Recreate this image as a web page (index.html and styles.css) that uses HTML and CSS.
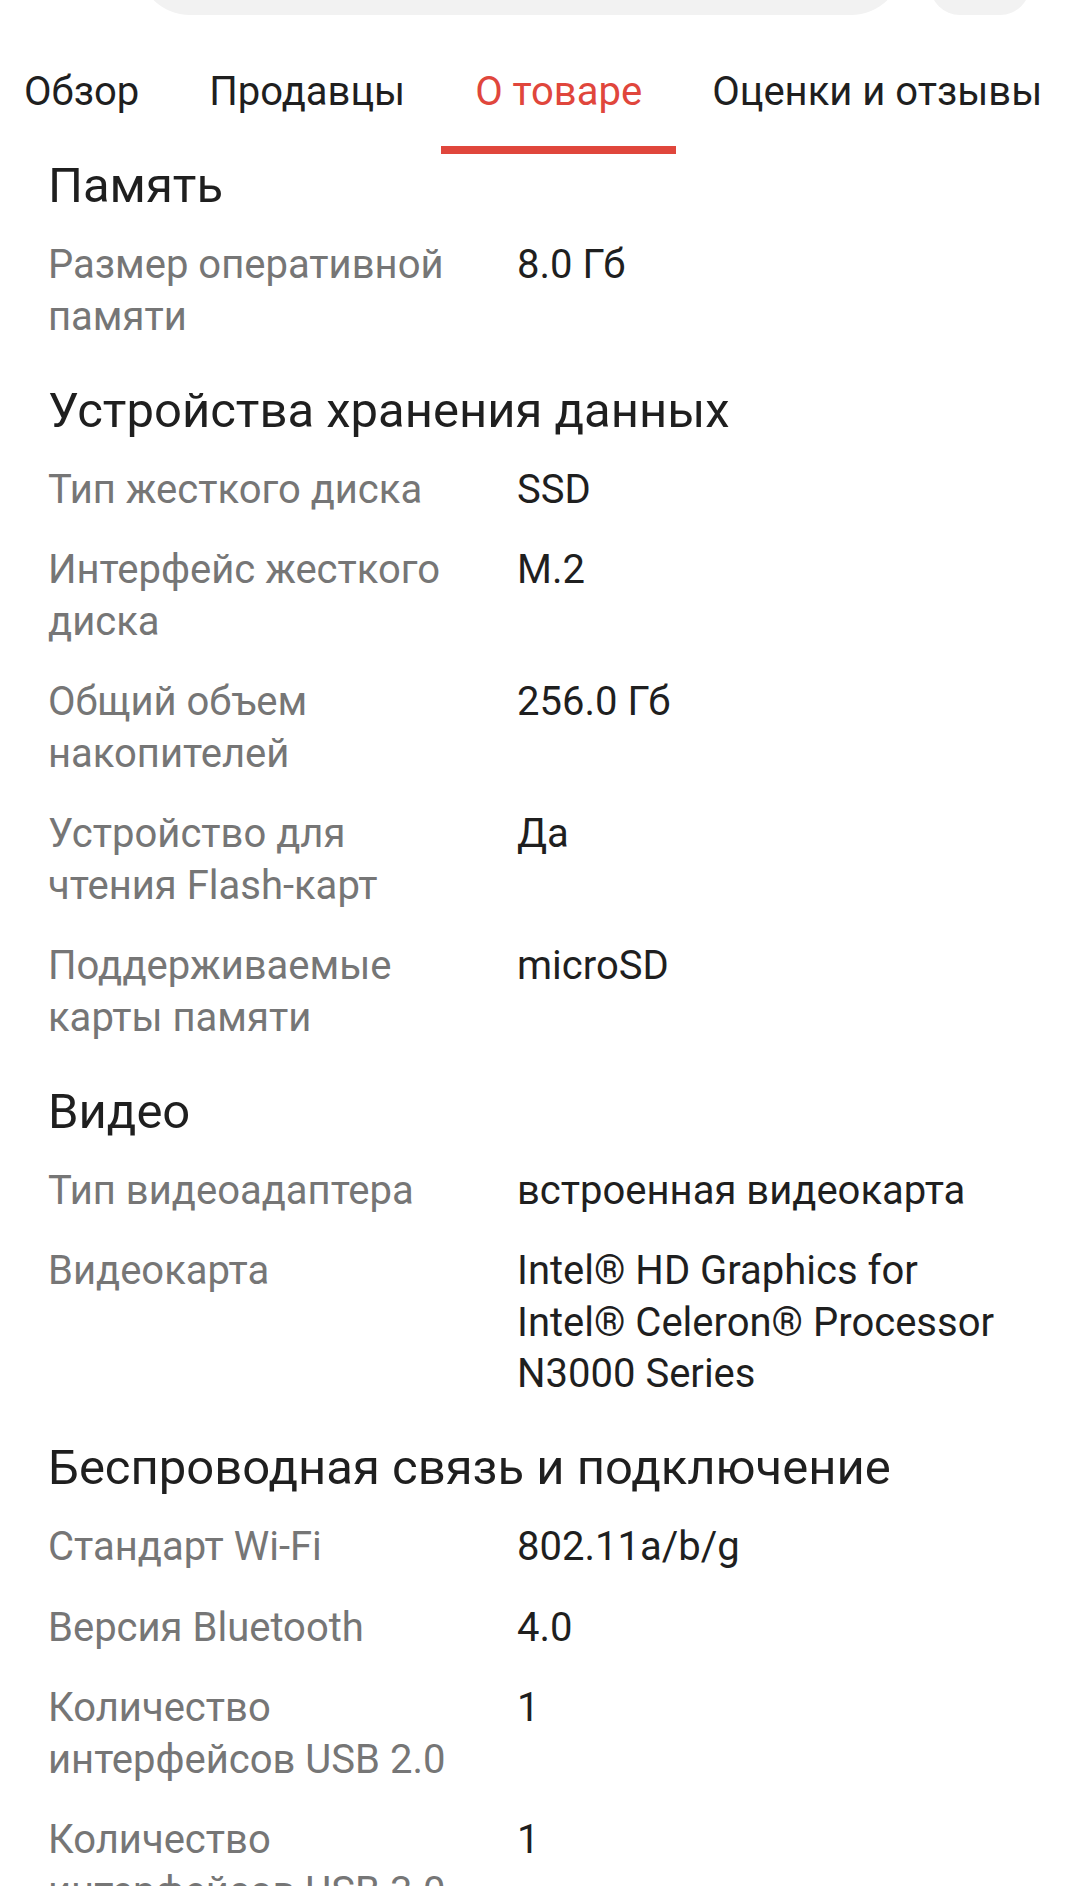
FILE: index.html
```html
<!DOCTYPE html>
<html lang="ru">
<head>
<meta charset="utf-8">
<title>О товаре</title>
<link rel="stylesheet" href="styles.css">
</head>
<body>
<div class="topbar">
  <div class="search"></div>
  <div class="round-btn"></div>
</div>
<nav class="tabs">
  <div class="tab">Обзор</div>
  <div class="tab">Продавцы</div>
  <div class="tab active">О товаре</div>
  <div class="tab">Оценки и отзывы</div>
</nav>
<main class="specs">
  <section class="group">
    <h2 class="group-title">Память</h2>
    <div class="rows">
      <div class="row"><div class="label">Размер оперативной памяти</div><div class="value">8.0 Гб</div></div>
    </div>
  </section>
  <section class="group">
    <h2 class="group-title">Устройства хранения данных</h2>
    <div class="rows">
      <div class="row"><div class="label">Тип жесткого диска</div><div class="value">SSD</div></div>
      <div class="row"><div class="label">Интерфейс жесткого диска</div><div class="value">M.2</div></div>
      <div class="row"><div class="label">Общий объем накопителей</div><div class="value">256.0 Гб</div></div>
      <div class="row"><div class="label">Устройство для чтения Flash-карт</div><div class="value">Да</div></div>
      <div class="row"><div class="label">Поддерживаемые карты памяти</div><div class="value">microSD</div></div>
    </div>
  </section>
  <section class="group">
    <h2 class="group-title">Видео</h2>
    <div class="rows">
      <div class="row"><div class="label">Тип видеоадаптера</div><div class="value">встроенная видеокарта</div></div>
      <div class="row"><div class="label">Видеокарта</div><div class="value">Intel® HD Graphics for Intel® Celeron® Processor N3000 Series</div></div>
    </div>
  </section>
  <section class="group">
    <h2 class="group-title">Беспроводная связь и подключение</h2>
    <div class="rows">
      <div class="row"><div class="label">Стандарт Wi-Fi</div><div class="value">802.11a/b/g</div></div>
      <div class="row"><div class="label">Версия Bluetooth</div><div class="value">4.0</div></div>
      <div class="row"><div class="label">Количество интерфейсов USB 2.0</div><div class="value">1</div></div>
      <div class="row"><div class="label">Количество интерфейсов USB 3.0</div><div class="value">1</div></div>
    </div>
  </section>
</main>
</body>
</html>
```

FILE: styles.css
```css
html, body {
  margin: 0;
  padding: 0;
  background: #ffffff;
}
body {
  font-family: Roboto, "Noto Sans", "Liberation Sans", sans-serif;
  color: #1f1f1f;
  width: 1079px;
  height: 1886px;
  overflow: hidden;
}
.topbar {
  display: flex;
  align-items: flex-end;
  height: 15px;
  overflow: hidden;
}
.search {
  flex-shrink: 0;
  width: 765px;
  height: 120px;
  margin-left: 138px;
  border-radius: 52px;
  background: #f2f2f2;
}
.round-btn {
  flex-shrink: 0;
  width: 100px;
  height: 120px;
  margin-left: 27px;
  border-radius: 30px;
  background: #f2f2f2;
}
.tabs {
  display: flex;
  gap: 70px;
  padding-left: 24px;
  padding-top: 51px;
  white-space: nowrap;
}
.tab {
  position: relative;
  font-size: 40px;
  line-height: 51px;
  padding-bottom: 37px;
  color: #1f1f1f;
}
.tab.active {
  color: #e0463c;
}
.tab.active::after {
  content: "";
  position: absolute;
  left: -34px;
  right: -34px;
  bottom: 0;
  height: 8px;
  background: #e0463c;
}
.specs {
  padding-left: 48px;
  padding-top: 4px;
}
.group + .group {
  margin-top: 40.5px;
}
.group-title {
  margin: 0 0 25px 0;
  font-size: 49px;
  line-height: 56px;
  font-weight: 400;
  color: #1f1f1f;
}
.rows {
  display: flex;
  flex-direction: column;
  gap: 29px;
}
.row {
  display: grid;
  grid-template-columns: 469px 485px;
  font-size: 40px;
  line-height: 51.5px;
}
.label {
  padding-right: 49px;
  color: #767676;
}
.value {
  color: #1f1f1f;
}
```
